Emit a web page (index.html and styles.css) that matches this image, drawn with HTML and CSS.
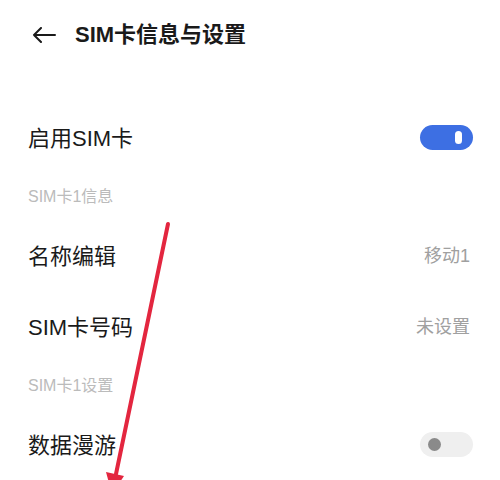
FILE: index.html
```html
<!DOCTYPE html>
<html lang="zh">
<head>
    <meta charset="UTF-8">
    <meta name="viewport" content="width=device-width, initial-scale=1.0">
    <title>SIM卡信息与设置</title>
    <link rel="stylesheet" href="styles.css">
</head>
<body>
    <div class="page">
        <div class="top-bar">
            <svg class="back-icon" width="24" height="16" viewBox="0 0 24 16">
                <path d="M23 8H2M9 1L2 8l7 7" fill="none" stroke="#1a1a1a" stroke-width="2" stroke-linecap="round" stroke-linejoin="round"/>
            </svg>
            <div class="title">SIM卡信息与设置</div>
        </div>

        <div class="list">
            <div class="row">
                <span class="row-label">启用SIM卡</span>
                <span class="switch on"><span class="knob"></span></span>
            </div>

            <div class="section-title">SIM卡1信息</div>
            <div class="row">
                <span class="row-label">名称编辑</span>
                <span class="row-value">移动1</span>
            </div>
            <div class="row">
                <span class="row-label">SIM卡号码</span>
                <span class="row-value">未设置</span>
            </div>

            <div class="section-title">SIM卡1设置</div>
            <div class="row">
                <span class="row-label">数据漫游</span>
                <span class="switch off"><span class="knob"></span></span>
            </div>
        </div>

        <!-- 标注箭头 -->
        <svg class="mark" width="500" height="480" viewBox="0 0 500 480">
            <line x1="168" y1="224" x2="116" y2="474" stroke="#e3263f" stroke-width="4" stroke-linecap="round"/>
            <polygon points="106,472 124,476 112,494" fill="#e3263f"/>
        </svg>
    </div>
</body>
</html>
```

FILE: styles.css
```css
body {
    margin: 0;
    background-color: #ffffff;
    font-family: "Liberation Sans", "Noto Sans CJK SC", sans-serif;
    color: #1a1a1a;
}
.page {
    position: relative;
    width: 500px;
    height: 480px;
    overflow: hidden;
}
.top-bar {
    display: flex;
    align-items: center;
    height: 64px;
    padding-left: 32px;
}
.back-icon {
    display: block;
    margin-top: 6px;
    margin-right: 19px;
}
.title {
    font-size: 22px;
    font-weight: 600;
}
.list {
    margin-top: 36px;
    padding: 0 27px 0 28px;
}
.row {
    display: flex;
    align-items: center;
    justify-content: space-between;
    height: 71px;
}
.row-label {
    font-size: 22px;
}
.row-value {
    font-size: 18px;
    color: #a0a0a0;
    margin-right: 3px;
}
.section-title {
    display: flex;
    align-items: center;
    height: 47px;
    font-size: 16px;
    color: #bbbbbb;
}
.switch {
    position: relative;
    display: block;
    width: 53px;
    height: 25px;
    margin-top: 4px;
    border-radius: 13px;
}
.switch.on {
    background-color: #3d6fe3;
}
.switch.off {
    background-color: #efefef;
}
.knob {
    position: absolute;
}
.switch.on .knob {
    right: 11px;
    top: 6px;
    width: 7px;
    height: 13px;
    border-radius: 4px;
    background-color: #ffffff;
}
.switch.off .knob {
    left: 8px;
    top: 6px;
    width: 13px;
    height: 13px;
    border-radius: 50%;
    background-color: #8a8a8a;
}
.mark {
    position: absolute;
    left: 0;
    top: 0;
    pointer-events: none;
}
```
